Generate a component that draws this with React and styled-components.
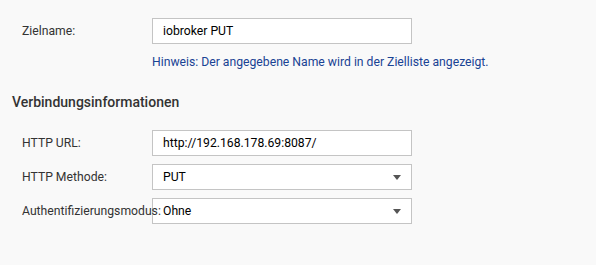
import React from "react";
import styled, { createGlobalStyle } from "styled-components";

const Global = createGlobalStyle`
  html, body { margin: 0; padding: 0; background: #f9f9f9; }
  body { font-family: Roboto, "Liberation Sans", sans-serif; }
`;

const Page = styled.div`
  width: 596px;
  height: 265px;
  box-sizing: border-box;
  padding: 18px 0 0 12px;
  background: #f9f9f9;
  overflow: hidden;
`;

const Row = styled.div`
  display: flex;
  align-items: center;
  padding-left: 10px;
  margin-top: ${(p) => p.$mt || 0}px;
`;

const Label = styled.label`
  position: relative;
  z-index: 1;
  width: 130px;
  flex: none;
  font-size: 12.2px;
  color: #333;
  white-space: nowrap;
  overflow: visible;
`;

const Field = styled.div`
  position: relative;
  width: 260px;
  height: 26px;
  box-sizing: border-box;
  border: 1px solid #c4c4c4;
  background: #fff;
  display: flex;
  align-items: center;
  padding-left: 10px;
  font-size: 12.2px;
  color: #000;
`;

const Arrow = styled.span`
  position: absolute;
  right: 10px;
  top: 50%;
  margin-top: -2px;
  width: 0;
  height: 0;
  border-left: 4px solid transparent;
  border-right: 4px solid transparent;
  border-top: 5px solid #555;
`;

const Hint = styled.div`
  margin: 10px 0 0 140px;
  font-size: 12.2px;
  line-height: 16px;
  color: #1a4394;
`;

const Heading = styled.h3`
  margin: 22px 0 18px 0;
  font-size: 14px;
  line-height: 20px;
  font-weight: 500;
  color: #333;
`;

const Select = ({ value }) => (
  <Field>
    {value}
    <Arrow />
  </Field>
);

export default function App() {
  return (
    <Page>
      <Global />
      <Row>
        <Label>Zielname:</Label>
        <Field>iobroker PUT</Field>
      </Row>
      <Hint>Hinweis: Der angegebene Name wird in der Zielliste angezeigt.</Hint>
      <Heading>Verbindungsinformationen</Heading>
      <Row>
        <Label>HTTP URL:</Label>
        <Field>http://192.168.178.69:8087/</Field>
      </Row>
      <Row $mt={8}>
        <Label>HTTP Methode:</Label>
        <Select value="PUT" />
      </Row>
      <Row $mt={8}>
        <Label>Authentifizierungsmodus:</Label>
        <Select value="Ohne" />
      </Row>
    </Page>
  );
}
